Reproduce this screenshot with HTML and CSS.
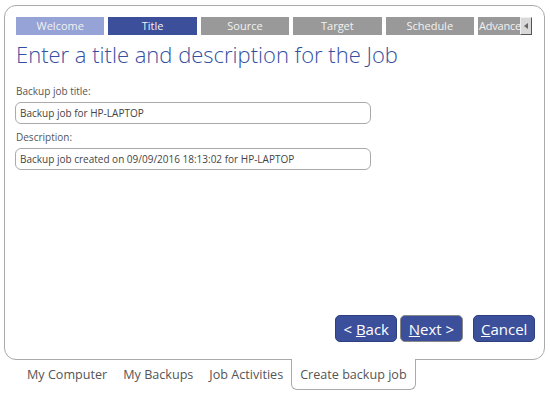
FILE: index.html
```html
<!DOCTYPE html>
<html lang="en">
<head>
    <meta charset="UTF-8">
    <title>Create backup job</title>
    <link rel="stylesheet" href="styles.css">
</head>
<body>
    <div class="panel">
        <!-- Wizard steps -->
        <div class="steps">
            <div class="step done">Welcome</div>
            <div class="step active">Title</div>
            <div class="step">Source</div>
            <div class="step">Target</div>
            <div class="step">Schedule</div>
            <div class="step last">Advanced</div>
            <div class="scroll-btn">
                <svg width="4" height="6" viewBox="0 0 4 6"><path d="M4 0 L0 3 L4 6 Z" fill="#666"/></svg>
            </div>
        </div>

        <h1 class="heading">Enter a title and description for the Job</h1>

        <label class="field-label">Backup job title:</label>
        <input type="text" class="field-input" value="Backup job for HP-LAPTOP">

        <label class="field-label">Description:</label>
        <input type="text" class="field-input" value="Backup job created on 09/09/2016 18:13:02 for HP-LAPTOP">

        <div class="spacer"></div>

        <div class="buttons">
            <button class="btn">&lt; <u>B</u>ack</button>
            <button class="btn btn-next"><u>N</u>ext &gt;</button>
            <button class="btn btn-cancel"><u>C</u>ancel</button>
        </div>
    </div>

    <!-- Bottom tabs -->
    <div class="tabs">
        <div class="tab">My Computer</div>
        <div class="tab">My Backups</div>
        <div class="tab">Job Activities</div>
        <div class="tab current">Create backup job</div>
    </div>
</body>
</html>
```

FILE: styles.css
```css
body {
    margin: 0;
    padding: 5px 5px 0 4px;
    background: #fff;
    font-family: "Open Sans", "Liberation Sans", sans-serif;
}

.panel {
    display: flex;
    flex-direction: column;
    height: 355px;
    box-sizing: border-box;
    border: 1px solid #aaa;
    border-radius: 12px;
    padding: 11px 9px 17px 11px;
}

/* Wizard steps */
.steps {
    display: flex;
    gap: 4px;
    height: 18px;
}

.step {
    flex: 0 0 88.4px;
    height: 18px;
    line-height: 18px;
    text-align: center;
    font-size: 11px;
    color: #f2f2f2;
    background: #999;
}

.step.done { background: #95a3d6; }
.step.active { background: #3b4f9b; }
.step.last { flex: 0 0 41px; text-align: left; padding-left: 1px; letter-spacing: -0.2px; overflow: hidden; white-space: clip; }

.scroll-btn {
    display: flex;
    align-items: center;
    justify-content: center;
    flex: 0 0 10px;
    margin-left: -4px;
    height: 16px;
    background: #d8d8d8;
    border: 1px solid #555;
    border-left-color: #eee;
    border-top-color: #eee;
}

.heading {
    margin: 4px 0 0 0;
    font-size: 22px;
    font-weight: 300;
    color: #3550a0;
}

.field-label {
    display: block;
    margin: 15px 0 4px 0;
    font-size: 10px;
    color: #555;
}

.field-input + .field-label { margin-top: 6px; }

.field-input {
    display: block;
    width: 356px;
    height: 22px;
    box-sizing: border-box;
    margin-left: -1px;
    padding: 0 4px;
    border: 1px solid #aaa;
    border-radius: 6px;
    font-family: inherit;
    font-size: 10px;
    color: #444;
}

.spacer { flex: 1; }

.buttons {
    display: flex;
    justify-content: flex-end;
    gap: 3px;
}

.btn {
    height: 27px;
    padding: 0 7px;
    border: 1px solid #2e3f80;
    border-radius: 5px;
    background: #3b4f9b;
    color: #fff;
    font-family: inherit;
    font-size: 15px;
}

.btn u { text-decoration-thickness: 1px; }

.btn-next { width: 63px; border-color: #888; }
.btn-cancel { width: 62px; margin-left: 7px; }

/* Bottom tabs */
.tabs {
    display: flex;
    margin: -1px 0 0 0;
    padding-left: 15px;
}

.tab {
    padding: 7px 8px 0 8px;
    height: 23px;
    font-size: 12.6px;
    color: #555;
}

.tab.current {
    background: #fff;
    border: 1px solid #aaa;
    border-top: none;
    border-radius: 0 0 6px 6px;
}
```
